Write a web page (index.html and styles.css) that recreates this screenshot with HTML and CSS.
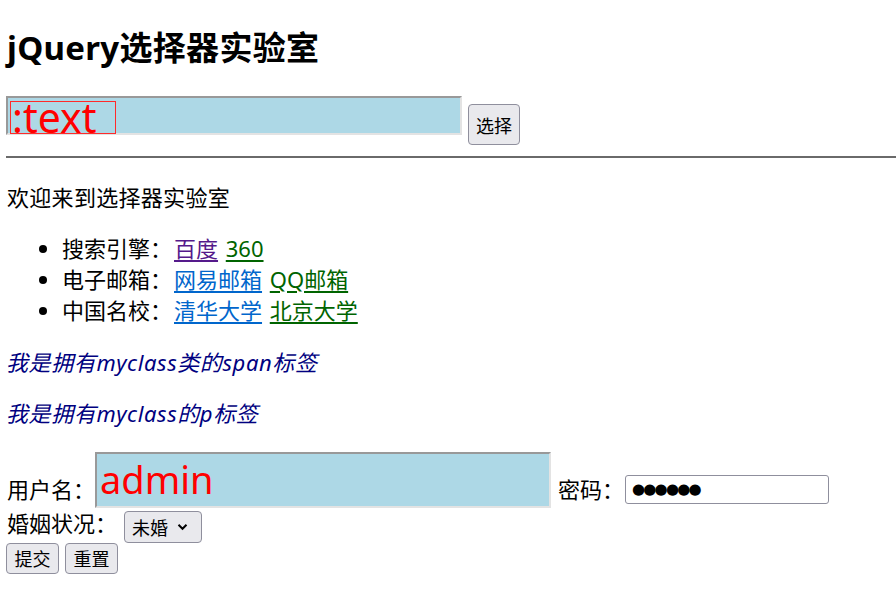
FILE: index.html
```html
<!DOCTYPE html>
<html lang="zh-CN">
<head>
<meta charset="utf-8">
<title>jQuery选择器实验室</title>
<link rel="stylesheet" href="styles.css">
</head>
<body>
<h1 class="title">jQuery选择器实验室</h1>
<div class="selector-row">
  <div class="big-input"><span class="hl">:text</span></div>
  <button class="btn btn-select" type="button">选择</button>
</div>
<hr class="rule">
<p class="welcome">欢迎来到选择器实验室</p>
<ul class="links">
  <li>搜索引擎：<a class="visited" href="#">百度</a> <a class="green" href="#">360</a></li>
  <li>电子邮箱：<a class="blue" href="#">网易邮箱</a> <a class="green" href="#">QQ邮箱</a></li>
  <li>中国名校：<a class="blue" href="#">清华大学</a> <a class="green" href="#">北京大学</a></li>
</ul>
<p class="myclass first">我是拥有myclass类的span标签</p>
<p class="myclass">我是拥有myclass的p标签</p>
<form class="login">
  <div class="form-row row-user">
    <span class="label">用户名：</span>
    <div class="user-input">admin</div>
    <span class="label label-pwd">密码：</span>
    <div class="pwd-input"><span class="dots">●●●●●●</span></div>
  </div>
  <div class="form-row row-marry">
    <span class="label">婚姻状况：</span>
    <div class="select">未婚<svg class="chev" width="11" height="8" viewBox="0 0 11 8"><path d="M1.5 1.8 L5.5 5.8 L9.5 1.8" fill="none" stroke="#000" stroke-width="2"/></svg></div>
  </div>
  <div class="form-row row-btns">
    <button class="btn btn-small" type="button">提交</button>
    <button class="btn btn-small" type="button">重置</button>
  </div>
</form>
</body>
</html>
```

FILE: styles.css
```css
html, body {
  background: #fff;
}
body {
  margin: 0;
  padding: 0 0 0 6px;
  font-family: "Noto Sans", "Noto Sans CJK SC", sans-serif;
  font-size: 22px;
  line-height: 31px;
  color: #000;
}
.title {
  margin: 28px 0 0 1px;
  font-size: 33px;
  line-height: 40px;
  font-weight: bold;
  letter-spacing: 0.3px;
}
.selector-row {
  display: flex;
  align-items: flex-start;
  margin-top: 28px;
}
.big-input {
  box-sizing: border-box;
  width: 456px;
  height: 39px;
  background: #add8e6;
  border-style: solid;
  border-width: 2px;
  border-color: #999 #e3e3e3 #e3e3e3 #999;
  padding: 3px 0 0 2px;
}
.hl {
  display: block;
  box-sizing: border-box;
  width: 106px;
  height: 33px;
  border: 1px solid #ff2a2a;
  color: #f00;
  font-size: 41px;
  line-height: 31px;
  padding-left: 1px;
}
.btn {
  box-sizing: border-box;
  background: #e9e9ed;
  border: 1px solid #8f8f9d;
  border-radius: 4px;
  font-family: "Noto Sans CJK SC", sans-serif;
  font-size: 18px;
  color: #000;
  padding: 0;
  margin: 0;
}
.btn-select {
  width: 52px;
  height: 41px;
  margin: 8px 0 0 6px;
}
.rule {
  margin: 11px 0 0 0;
  border: 0;
  border-top: 2px solid #6a6a6a;
  height: 0;
}
.welcome {
  margin: 24px 0 0 1px;
  letter-spacing: 0.3px;
}
.links {
  margin: 20px 0 0 0;
  padding-left: 56px;
  word-spacing: 2px;
}
.links a {
  text-decoration: underline;
  text-underline-offset: 3px;
}
.links li > a:first-child {
  margin-left: 2px;
}
.visited { color: #551a8b; }
.green { color: #006400; }
.blue { color: #0066cc; }
.myclass {
  font-style: italic;
  color: #000080;
  margin: 20px 0 0 0;
  letter-spacing: 0.6px;
}
.myclass.first {
  margin-top: 21px;
}
.login {
  margin-top: 23px;
}
.form-row {
  display: flex;
}
.row-user {
  align-items: flex-end;
}
.label {
  margin-left: 1px;
}
.row-user .label {
  margin-bottom: 3px;
}
.user-input {
  box-sizing: border-box;
  width: 456px;
  height: 56px;
  background: #add8e6;
  border-style: solid;
  border-width: 2px;
  border-color: #999 #e3e3e3 #e3e3e3 #999;
  color: #f00;
  font-size: 38px;
  line-height: 50px;
  padding-left: 3px;
}
.label-pwd {
  margin-left: 7px;
}
.pwd-input {
  box-sizing: border-box;
  width: 204px;
  height: 29px;
  margin: 0 0 4px 1px;
  border: 1px solid #8f8f9d;
  border-radius: 3px;
  background: #fff;
  padding-left: 6px;
  display: flex;
  align-items: center;
}
.dots {
  font-family: "DejaVu Sans", sans-serif;
  font-size: 15px;
  letter-spacing: -1.8px;
  line-height: 1;
}
.row-marry {
  align-items: flex-start;
  margin-top: 0;
}
.select {
  box-sizing: border-box;
  width: 78px;
  height: 32px;
  margin: 3px 0 0 7px;
  background: #e9e9ed;
  border: 1px solid #8f8f9d;
  border-radius: 4px;
  font-family: "Noto Sans CJK SC", sans-serif;
  font-size: 18px;
  line-height: 30px;
  padding-left: 7px;
  display: flex;
  align-items: center;
}
.chev {
  margin-left: 9px;
}
.row-btns {
  gap: 6px;
}
.btn-small {
  width: 53px;
  height: 31px;
  line-height: 29px;
}
```
